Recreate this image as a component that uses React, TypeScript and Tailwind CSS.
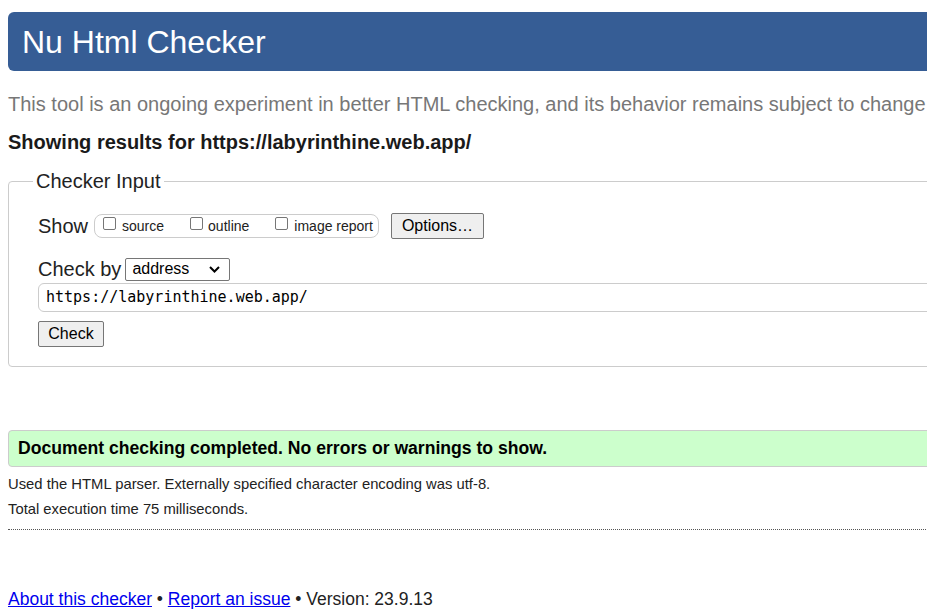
export default function App() {
  return (
    <div className="h-[615px] w-full overflow-hidden bg-white">
      <div className="w-[1040px] px-[8px] pt-[12px] font-['Liberation_Sans',Arial,sans-serif] text-[#222]">
        {/* Title bar */}
        <div className="flex h-[59px] items-center rounded-[6px] bg-[#365d95] pl-[14px] text-[32px] leading-none text-white">
          Nu Html Checker
        </div>

        <p className="mt-[21px] text-[20px] leading-[24px] text-[#777]">
          This tool is an ongoing experiment in better HTML checking, and its behavior remains subject to change
        </p>

        <p className="mt-[14px] text-[20px] font-bold leading-[24px] text-[#1a1a1a]">
          Showing results for https://labyrinthine.web.app/
        </p>

        <fieldset className="mt-[15px] rounded-[4px] border border-[#ccc] pb-[19px] pl-[24px]">
          <legend className="px-[3px] text-[20px] leading-[24px]">Checker Input</legend>
          <div className="mt-[20px] pl-[5px]">
            {/* Show */}
            <div className="flex h-[26px] items-center">
              <span className="text-[20px] leading-[24px]">Show</span>
              <div className="ml-[6px] flex h-[24px] items-center rounded-[8px] border border-[#ccc] pl-[8px] pr-[5px] text-[14px] leading-[16px]">
                <Box />
                <span className="ml-[6px]">source</span>
                <span className="ml-[26px]">
                  <Box />
                </span>
                <span className="ml-[5px]">outline</span>
                <span className="ml-[26px]">
                  <Box />
                </span>
                <span className="ml-[6px]">image report</span>
              </div>
              <button className="ml-[12px] flex h-[26px] w-[93px] items-center rounded-[2px] border border-[#767676] bg-[#efefef] pl-[10px] text-[16px] text-black">
                Options…
              </button>
            </div>

            {/* Check by */}
            <div className="mt-[18px] flex h-[24px] items-center">
              <span className="text-[20px] leading-[24px]">Check by</span>
              <div className="ml-[4px] flex h-[23px] w-[105px] items-center justify-between rounded-[2px] border border-[#767676] pl-[6px] pr-[9px] text-[16px] text-black">
                <span>address</span>
                <svg width="11" height="7" viewBox="0 0 11 7" fill="none">
                  <path d="M1 1 L5.5 5.5 L10 1" stroke="#000" strokeWidth="2" />
                </svg>
              </div>
            </div>

            <div className="mt-[2px] flex h-[29px] items-center rounded-[6px] border border-[#ccc] pl-[7px] font-['DejaVu_Sans_Mono',monospace] text-[15px] text-black">
              https://labyrinthine.web.app/
            </div>

            <button className="mt-[9px] flex h-[26px] w-[66px] items-center justify-center rounded-[2px] border border-[#767676] bg-[#efefef] text-[16px] text-black">
              Check
            </button>
          </div>
        </fieldset>

        <div className="mt-[63px] flex h-[37px] items-center rounded-[4px] border border-[#ccc] bg-[#ccffcc] pl-[9px] text-[17.6px] font-bold text-black">
          Document checking completed. No errors or warnings to show.
        </div>

        <p className="mt-[7px] text-[14.8px] leading-[20px]">
          Used the HTML parser. Externally specified character encoding was utf-8.
        </p>
        <p className="mt-[5px] text-[14.8px] leading-[20px]">Total execution time 75 milliseconds.</p>

        <div className="mt-[10px] border-t border-dotted border-[#555]" />

        <p className="mt-[58px] text-[17.5px] leading-[22px]">
          <a href="#" className="text-[#0000ee] underline">About this checker</a> •{' '}
          <a href="#" className="text-[#0000ee] underline">Report an issue</a> • Version: 23.9.13
        </p>
      </div>
    </div>
  );
}

function Box() {
  return <span className="mb-[6px] block h-[13px] w-[13px] rounded-[2px] border border-[#767676] bg-white" />;
}
